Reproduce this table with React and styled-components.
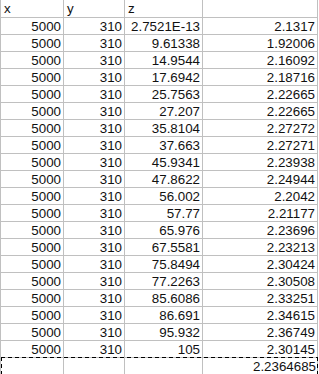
import React from "react";
import styled, { createGlobalStyle } from "styled-components";

const GlobalStyle = createGlobalStyle`
  html, body {
    margin: 0;
    padding: 0;
    background: #ffffff;
  }
  body {
    font-family: "Liberation Sans", Arial, sans-serif;
  }
`;

const rows = [
  ["5000", "310", "2.7521E-13", "2.1317"],
  ["5000", "310", "9.61338", "1.92006"],
  ["5000", "310", "14.9544", "2.16092"],
  ["5000", "310", "17.6942", "2.18716"],
  ["5000", "310", "25.7563", "2.22665"],
  ["5000", "310", "27.207", "2.22665"],
  ["5000", "310", "35.8104", "2.27272"],
  ["5000", "310", "37.663", "2.27271"],
  ["5000", "310", "45.9341", "2.23938"],
  ["5000", "310", "47.8622", "2.24944"],
  ["5000", "310", "56.002", "2.2042"],
  ["5000", "310", "57.77", "2.21177"],
  ["5000", "310", "65.976", "2.23696"],
  ["5000", "310", "67.5581", "2.23213"],
  ["5000", "310", "75.8494", "2.30424"],
  ["5000", "310", "77.2263", "2.30508"],
  ["5000", "310", "85.6086", "2.33251"],
  ["5000", "310", "86.691", "2.34615"],
  ["5000", "310", "95.932", "2.36749"],
  ["5000", "310", "105", "2.30145"],
];

const App = () => {
  return (
    <>
      <GlobalStyle />
      <Sheet>
        <Row $first>
          <Cell>x</Cell>
          <Cell>y</Cell>
          <Cell>z</Cell>
          <Cell />
        </Row>
        {rows.map((r, i) => (
          <Row key={i}>
            {r.map((v, j) => (
              <Cell key={j} $num>
                {v}
              </Cell>
            ))}
          </Row>
        ))}
        <Row $last>
          <Cell />
          <Cell />
          <Cell />
          <Cell $num $overflow>
            2.2364685
          </Cell>
          <Marquee />
        </Row>
      </Sheet>
    </>
  );
};

export default App;

/* ---------------- Styled Components ---------------- */

const Sheet = styled.div`
  width: 318px;
  border-left: 1px solid #c0c0c0;
  box-sizing: border-box;
  color: #111;
  font-size: 13.33px;
`;

const Row = styled.div`
  position: relative;
  display: grid;
  grid-template-columns: 63px 61px 78px 115px;
  height: ${(p) => (p.$first ? "18px" : "17px")};
  box-sizing: border-box;
  border-bottom: ${(p) => (p.$last ? "none" : "1px solid #c0c0c0")};
`;

const Cell = styled.div`
  box-sizing: border-box;
  border-right: 1px solid #c0c0c0;
  padding: 0 2px 0 3px;
  line-height: 17px;
  text-align: ${(p) => (p.$num ? "right" : "left")};
  white-space: nowrap;
  overflow: ${(p) => (p.$overflow ? "visible" : "hidden")};
  padding-right: ${(p) => (p.$overflow ? "1px" : "2px")};
`;

/* copy selection marching-ants around the last row */
const Marquee = styled.div`
  position: absolute;
  left: 0;
  top: -1px;
  width: 317px;
  height: 20px;
  pointer-events: none;
  background:
    repeating-linear-gradient(90deg, #000 0 4px, transparent 4px 7px) top left / 100% 1px no-repeat,
    repeating-linear-gradient(180deg, #000 0 4px, transparent 4px 7px) top left / 1px 100% no-repeat,
    repeating-linear-gradient(180deg, #000 0 4px, transparent 4px 7px) top right / 1px 100% no-repeat;
`;
